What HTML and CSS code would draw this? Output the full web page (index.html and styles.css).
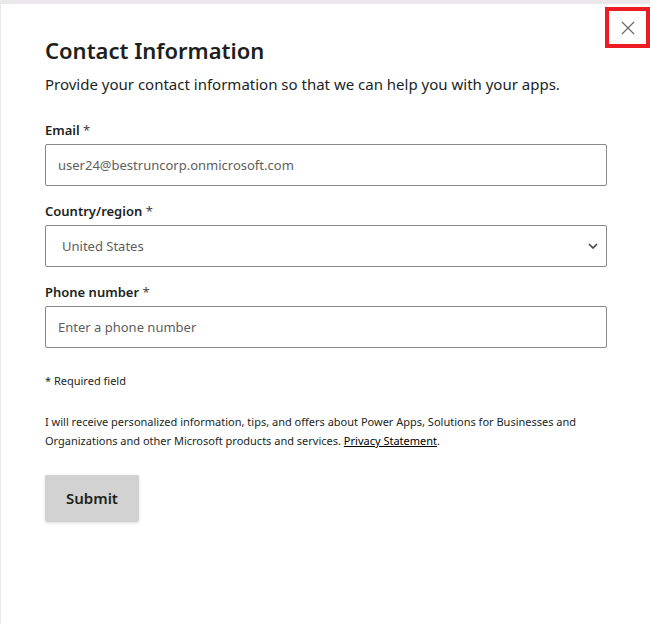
FILE: index.html
```html
<!DOCTYPE html>
<html lang="en">
<head>
<meta charset="utf-8">
<title>Contact Information</title>
<link rel="stylesheet" href="styles.css">
</head>
<body>
<div class="page">
  <div class="dialog">
    <button class="close" aria-label="Close">
      <svg width="14" height="14" viewBox="0 0 14 14"><path d="M1 1 L13 13 M13 1 L1 13" stroke="#666" stroke-width="1.1" fill="none"/></svg>
    </button>
    <h1 class="title">Contact Information</h1>
    <p class="subtitle">Provide your contact information so that we can help you with your apps.</p>
    <form class="form">
      <div class="field">
        <label class="label">Email <span class="req">*</span></label>
        <div class="input">user24@bestruncorp.onmicrosoft.com</div>
      </div>
      <div class="field">
        <label class="label">Country/region <span class="req">*</span></label>
        <div class="input select"><span class="select-text">United States</span>
          <svg class="chev" width="10" height="6" viewBox="0 0 10 6"><path d="M1 1 L5 5 L9 1" stroke="#444" stroke-width="1.6" fill="none"/></svg>
        </div>
      </div>
      <div class="field">
        <label class="label">Phone number <span class="req">*</span></label>
        <div class="input">Enter a phone number</div>
      </div>
      <p class="required">* Required field</p>
      <p class="disclaimer">I will receive personalized information, tips, and offers about Power Apps, Solutions for Businesses and Organizations and other Microsoft products and services. <a href="#">Privacy Statement</a>.</p>
      <button type="button" class="submit">Submit</button>
    </form>
  </div>
</div>
</body>
</html>
```
FILE: styles.css
```css
html, body {
  margin: 0;
  padding: 0;
  background: #ebe8ec;
}
body {
  font-family: "Noto Sans", "Open Sans", sans-serif;
  color: #201f1e;
}
.page {
  height: 624px;
  padding: 4px 0 0 1px;
  box-sizing: border-box;
  overflow: hidden;
}
.dialog {
  position: relative;
  background: #fff;
  height: 620px;
  padding: 30px 43px 0 44px;
  box-sizing: border-box;
}
.close {
  position: absolute;
  top: 3px;
  right: 0;
  width: 45px;
  height: 41px;
  border: 4px solid #ed1c24;
  background: #fff;
  padding: 0;
  display: flex;
  align-items: center;
  justify-content: center;
}
.title {
  margin: 0;
  font-size: 22px;
  font-weight: 600;
  line-height: 32px;
  color: #201f1e;
}
.subtitle {
  margin: 7px 0 0;
  font-size: 15px;
  line-height: 22px;
  color: #201f1e;
}
.form {
  margin-top: 25px;
  display: flex;
  flex-direction: column;
}
.field {
  display: flex;
  flex-direction: column;
  margin-bottom: 15px;
}
.label {
  font-size: 13px;
  font-weight: 600;
  line-height: 20px;
  margin-bottom: 4px;
}
.req {
  font-weight: 400;
  color: #444;
}
.input {
  height: 42px;
  border: 1px solid #8a8886;
  border-radius: 2px;
  box-sizing: border-box;
  padding: 0 12px;
  display: flex;
  align-items: center;
  font-size: 13px;
  color: #605e5c;
}
.select {
  justify-content: space-between;
  padding: 0 8px 0 16px;
}
.required {
  margin: 10px 0 0;
  font-size: 11px;
  line-height: 16px;
}
.disclaimer {
  margin: 23px 0 0;
  font-size: 11px;
  line-height: 19px;
  color: #201f1e;
}
.disclaimer a {
  color: #000;
  text-decoration: underline;
}
.submit {
  margin-top: 25px;
  align-self: flex-start;
  width: 94px;
  height: 46px;
  border: none;
  border-radius: 2px;
  background: #d2d2d2;
  box-shadow: 0 1.6px 3.6px rgba(0,0,0,0.13), 0 0.3px 0.9px rgba(0,0,0,0.11);
  font-family: inherit;
  font-size: 15px;
  font-weight: 600;
  color: #201f1e;
}
```
